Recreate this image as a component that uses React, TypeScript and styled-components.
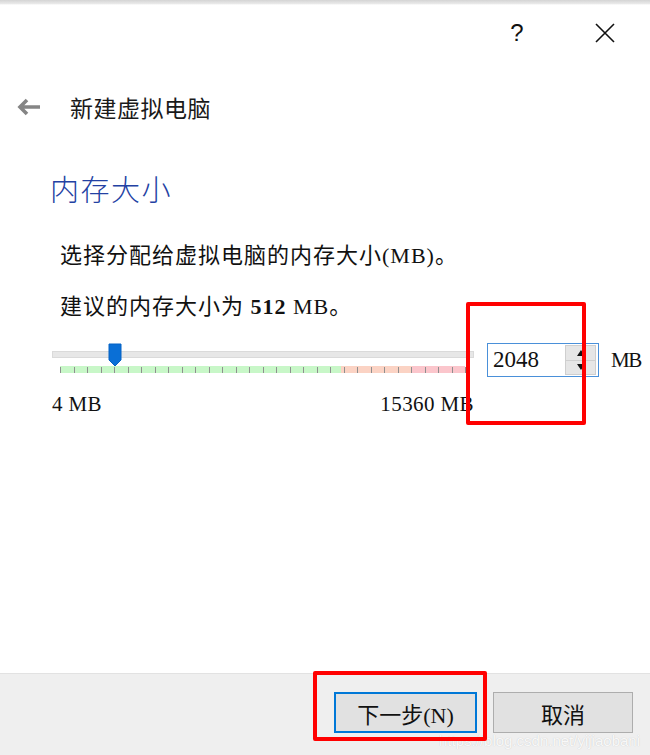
import React from "react";
import styled, { createGlobalStyle } from "styled-components";

const Global = createGlobalStyle`
  html, body { margin: 0; padding: 0; background: #fff; }
  body { width: 650px; height: 755px; overflow: hidden; }
`;

const SERIF = `"Liberation Serif", "Noto Sans CJK SC", serif`;
const SANS = `"Noto Sans CJK SC", "Noto Sans", sans-serif`;

const Window = styled.div`
  position: relative;
  width: 650px;
  height: 755px;
  display: flex;
  flex-direction: column;
  background: #fff;
  overflow: hidden;
`;

const TopShade = styled.div`
  height: 5px;
  background: linear-gradient(#d4d4d4, #e8e8e8 70%, #fff);
`;

const TitleBar = styled.div`
  height: 56px;
  display: flex;
  justify-content: flex-end;
  align-items: center;
  gap: 48px;
  padding-right: 25px;
`;

const TitleButton = styled.div`
  width: 40px;
  height: 40px;
  display: flex;
  align-items: center;
  justify-content: center;
  font-family: "Liberation Sans", sans-serif;
  font-size: 24px;
  color: #111;
`;

const Header = styled.div`
  margin-top: 23px;
  height: 46px;
  display: flex;
  align-items: center;
  padding-left: 16px;
`;

const Title = styled.div`
  margin-left: 29px;
  font-family: ${SANS};
  font-size: 23px;
  letter-spacing: 0.5px;
  color: #1a1a1a;
`;

const Content = styled.div`
  padding-left: 50px;
  display: flex;
  flex-direction: column;
`;

const Heading = styled.div`
  margin-top: 38px;
  height: 40px;
  line-height: 40px;
  font-family: ${SANS};
  font-weight: 300;
  font-size: 29px;
  letter-spacing: 1.5px;
  color: #2341a3;
`;

const Para = styled.div<{ $mt: number }>`
  margin-top: ${(p) => p.$mt}px;
  padding-left: 10px;
  height: 30px;
  line-height: 30px;
  font-family: ${SERIF};
  font-size: 22px;
  letter-spacing: 1px;
  color: #111;
  white-space: nowrap;
`;

const Bold = styled.b`
  font-weight: bold;
`;

const SliderRow = styled.div`
  margin-top: 21px;
  margin-left: 2px;
  height: 34px;
  display: flex;
  align-items: center;
`;

const SliderCol = styled.div`
  position: relative;
  width: 422px;
  height: 34px;
`;

const Track = styled.div`
  position: absolute;
  left: 0;
  right: 0;
  top: 8px;
  height: 7px;
  background: #e7e7e7;
  border: 1px solid #dadada;
  box-sizing: border-box;
`;

const Handle = styled.svg`
  position: absolute;
  top: 0;
`;

const Ticks = styled.div`
  position: absolute;
  left: 8px;
  top: 23px;
  width: 405px;
  height: 7px;
  background: linear-gradient(
    to right,
    #c8f7c8 0%,
    #c8f7c8 69.5%,
    #fbd3c4 69.5%,
    #fbd3c4 87%,
    #fbc6cc 87%,
    #fbc6cc 100%
  );
`;

const Tick = styled.div`
  position: absolute;
  top: 1px;
  width: 1px;
  height: 6px;
  background: #8f8f8f;
`;

const SpinBox = styled.div`
  margin-left: 13px;
  width: 112px;
  height: 34px;
  box-sizing: border-box;
  border: 1px solid #4a90d9;
  display: flex;
  align-items: center;
  justify-content: space-between;
  padding: 0 2px 0 5px;
  background: #fff;
`;

const SpinValue = styled.span`
  font-family: ${SERIF};
  font-size: 23px;
  color: #111;
`;

const SpinButtons = styled.div`
  width: 31px;
  height: 30px;
  display: flex;
  flex-direction: column;
  border: 1px solid #cfcfcf;
  box-sizing: border-box;
  background: #e6e6e6;
`;

const SpinBtn = styled.div<{ $top?: boolean }>`
  flex: 1;
  display: flex;
  align-items: center;
  justify-content: center;
  border-bottom: ${(p) => (p.$top ? "1px solid #cfcfcf" : "none")};
`;

const Unit = styled.span`
  margin-left: 12px;
  font-family: ${SERIF};
  font-size: 21px;
  letter-spacing: -1.5px;
  color: #111;
`;

const Labels = styled.div`
  margin-top: 15px;
  margin-left: 2px;
  width: 422px;
  height: 24px;
  line-height: 24px;
  display: flex;
  justify-content: space-between;
  font-family: ${SERIF};
  font-size: 21px;
  letter-spacing: 0.4px;
  color: #111;
  white-space: nowrap;
`;

const Spacer = styled.div`
  flex: 1;
`;

const Footer = styled.div`
  position: relative;
  height: 82px;
  box-sizing: border-box;
  border-top: 1px solid #e2e2e2;
  background: #efefef;
  display: flex;
  justify-content: flex-end;
  align-items: flex-start;
  padding: 18px 17px 0 0;
  gap: 16px;
`;

const Button = styled.div<{ $w: number; $default?: boolean }>`
  width: ${(p) => p.$w}px;
  height: 41px;
  box-sizing: border-box;
  background: #e1e1e1;
  border: ${(p) => (p.$default ? "2px solid #0078d7" : "1px solid #adadad")};
  display: flex;
  align-items: center;
  justify-content: center;
  font-family: ${SERIF};
  font-size: 22px;
  color: #111;
`;

const Watermark = styled.div`
  position: absolute;
  right: 10px;
  bottom: 6px;
  font-family: "Liberation Sans", sans-serif;
  font-size: 15px;
  color: rgba(255, 255, 255, 0.9);
  text-shadow: 0 0 1px rgba(0, 0, 0, 0.2);
`;

const RedBox = styled.div<{ $l: number; $t: number; $w: number; $h: number }>`
  position: absolute;
  left: ${(p) => p.$l}px;
  top: ${(p) => p.$t}px;
  width: ${(p) => p.$w}px;
  height: ${(p) => p.$h}px;
  box-sizing: border-box;
  border: 4px solid #ff0000;
  border-radius: 2px;
  pointer-events: none;
`;

const MIN = 4;
const MAX = 15360;
const VALUE = 2048;

export default function App() {
  const ticks = Array.from({ length: 31 }, (_, i) => i);
  const handleX = 8 + ((VALUE - MIN) / (MAX - MIN)) * 405 - 6;
  return (
    <Window>
      <Global />
      <TopShade />
      <TitleBar>
        <TitleButton>?</TitleButton>
        <TitleButton>
          <svg width="20" height="20" viewBox="0 0 20 20">
            <path d="M1 1 L19 19 M19 1 L1 19" stroke="#111" strokeWidth="1.6" fill="none" />
          </svg>
        </TitleButton>
      </TitleBar>
      <Header>
        <svg width="25" height="18" viewBox="0 0 25 18">
          <path d="M24 9 H5 M11 2 L4 9 L11 16" stroke="#858585" strokeWidth="3.6" fill="none" />
        </svg>
        <Title>新建虚拟电脑</Title>
      </Header>
      <Content>
        <Heading>内存大小</Heading>
        <Para $mt={33}>选择分配给虚拟电脑的内存大小(MB)。</Para>
        <Para $mt={21}>
          建议的内存大小为 <Bold>512</Bold> MB。
        </Para>
        <SliderRow>
          <SliderCol>
            <Track />
            <Ticks>
              {ticks.map((i) => (
                <Tick key={i} style={{ left: i * 13.5 }} />
              ))}
            </Ticks>
            <Handle width="14" height="24" viewBox="0 0 14 24" style={{ left: handleX }}>
              <path d="M1 1 H13 V17 L7 23 L1 17 Z" fill="#0a6fd6" stroke="#0563c4" strokeWidth="1" />
            </Handle>
          </SliderCol>
          <SpinBox>
            <SpinValue>2048</SpinValue>
            <SpinButtons>
              <SpinBtn $top>
                <svg width="8" height="6" viewBox="0 0 8 6">
                  <path d="M0 6 L4 0 L8 6 Z" fill="#111" />
                </svg>
              </SpinBtn>
              <SpinBtn>
                <svg width="8" height="6" viewBox="0 0 8 6">
                  <path d="M0 0 L4 6 L8 0 Z" fill="#111" />
                </svg>
              </SpinBtn>
            </SpinButtons>
          </SpinBox>
          <Unit>MB</Unit>
        </SliderRow>
        <Labels>
          <span>4 MB</span>
          <span>15360 MB</span>
        </Labels>
      </Content>
      <Spacer />
      <Footer>
        <Button $w={143} $default>
          下一步(N)
        </Button>
        <Button $w={140}>取消</Button>
        <Watermark>https://blog.csdn.net/yijiaobani</Watermark>
      </Footer>
      <RedBox $l={466} $t={302} $w={120} $h={123} />
      <RedBox $l={313} $t={671} $w={174} $h={70} />
    </Window>
  );
}
